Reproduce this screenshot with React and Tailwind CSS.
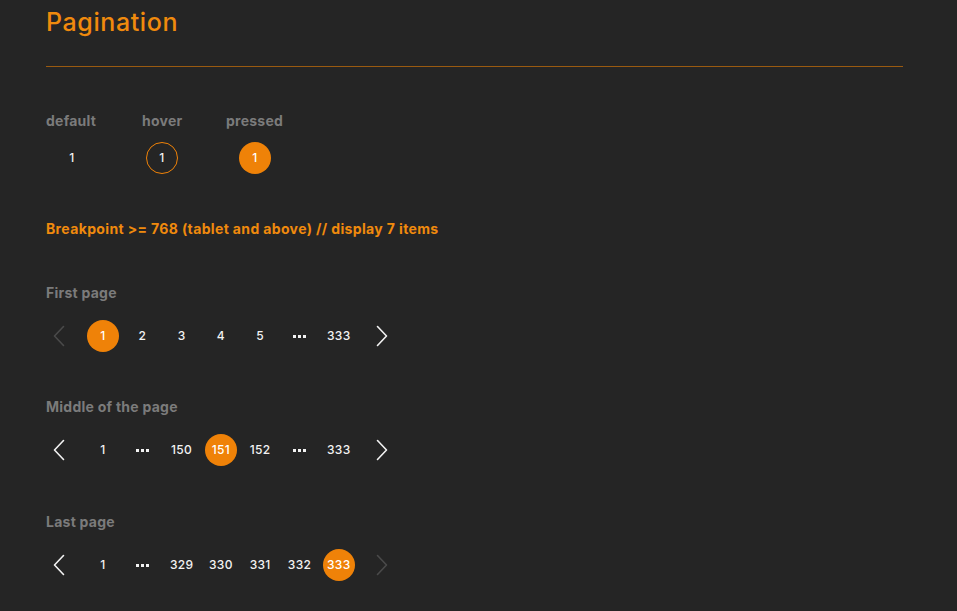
import React from 'react';

const ORANGE = 'bg-[#ef8208]';

const Chevron = ({ dir = 'right', disabled = false }) => (
  <div className="w-[26px] h-8 flex items-center justify-center">
    <svg width="12" height="22" viewBox="0 0 12 22" fill="none">
      <path
        d={dir === 'right' ? 'M1.5 1.5 L10.5 11 L1.5 20.5' : 'M10.5 1.5 L1.5 11 L10.5 20.5'}
        stroke={disabled ? '#4a4a4a' : '#f2f2f2'}
        strokeWidth="1.6"
        strokeLinecap="round"
        strokeLinejoin="round"
      />
    </svg>
  </div>
);

const Dots = () => (
  <div className="w-8 h-8 flex items-center justify-center gap-[2px]">
    <span className="w-[3px] h-[3px] bg-[#f2f2f2]"></span>
    <span className="w-[3px] h-[3px] bg-[#f2f2f2]"></span>
    <span className="w-[3px] h-[3px] bg-[#f2f2f2]"></span>
  </div>
);

const PageItem = ({ label, state = 'default' }) => {
  let cls = 'w-8 h-8 rounded-full flex items-center justify-center text-[12px] font-medium text-[#f2f2f2] tracking-[0.3px]';
  if (state === 'active') cls += ` ${ORANGE} text-white`;
  if (state === 'hover') cls += ' border border-[#ef8208]';
  return <div className={cls}>{label}</div>;
};

const Row = ({ items, prevDisabled, nextDisabled }) => (
  <div className="flex items-center">
    <Chevron dir="left" disabled={prevDisabled} />
    <div className="flex items-center gap-[7.3px] ml-[15px] mr-[14px]">
      {items.map((it, i) =>
        it === '...' ? <Dots key={i} /> : <PageItem key={i} label={it.label} state={it.active ? 'active' : 'default'} />
      )}
    </div>
    <Chevron dir="right" disabled={nextDisabled} />
  </div>
);

const n = (label, active = false) => ({ label, active });

const Label = ({ children, className = '' }) => (
  <div className={`text-[14px] font-bold text-[#7b7b7b] leading-5 tracking-[0.25px] ${className}`}>{children}</div>
);

export default function App() {
  return (
    <div
      className="min-h-[611px] w-full bg-[#252525] px-[46px] pt-[6px]"
      style={{ fontFamily: 'Inter, "Noto Sans", sans-serif' }}
    >
      <h1 className="text-[25px] font-medium text-[#f08a0d] leading-[32px] tracking-[0.6px]">Pagination</h1>
      <div className="mt-[28px] mr-[8px] h-px bg-[#9a5a10]"></div>

      <div className="mt-[44px] flex">
        <div className="w-[96px] flex flex-col">
          <Label>default</Label>
          <div className="mt-[11px] w-[52px] flex justify-center">
            <PageItem label="1" />
          </div>
        </div>
        <div className="w-[84px] flex flex-col">
          <Label>hover</Label>
          <div className="mt-[11px] w-[40px] flex justify-center">
            <PageItem label="1" state="hover" />
          </div>
        </div>
        <div className="flex flex-col">
          <Label>pressed</Label>
          <div className="mt-[11px] w-[58px] flex justify-center">
            <PageItem label="1" state="active" />
          </div>
        </div>
      </div>

      <div className="mt-[45px] text-[14px] font-bold text-[#f08a0d] leading-5 tracking-[0.36px]">
        Breakpoint &gt;= 768 (tablet and above) // display 7 items
      </div>

      <Label className="mt-[44px]">First page</Label>
      <div className="mt-[17px]">
        <Row
          prevDisabled
          items={[n('1', true), n('2'), n('3'), n('4'), n('5'), '...', n('333')]}
        />
      </div>

      <Label className="mt-[45px]">Middle of the page</Label>
      <div className="mt-[17px]">
        <Row items={[n('1'), '...', n('150'), n('151', true), n('152'), '...', n('333')]} />
      </div>

      <Label className="mt-[46px]">Last page</Label>
      <div className="mt-[17px]">
        <Row
          nextDisabled
          items={[n('1'), '...', n('329'), n('330'), n('331'), n('332'), n('333', true)]}
        />
      </div>
    </div>
  );
}
